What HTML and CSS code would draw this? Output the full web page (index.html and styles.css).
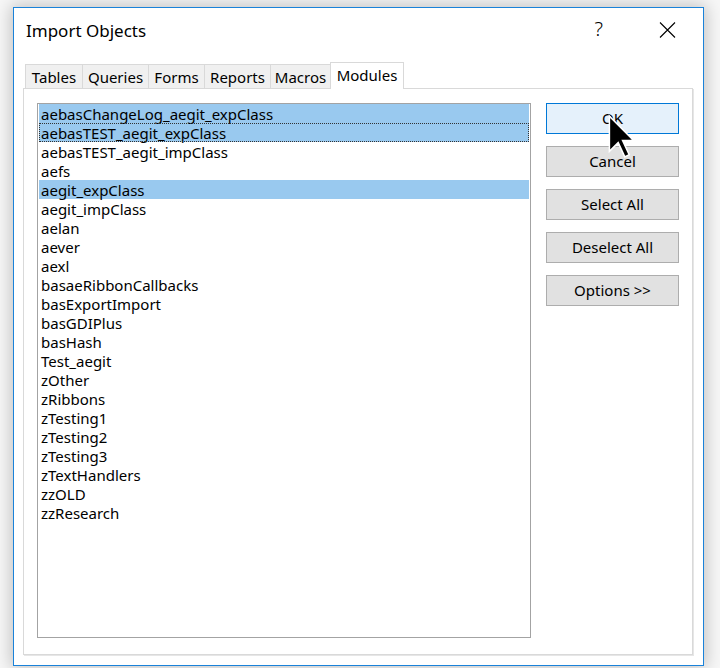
FILE: index.html
```html
<!DOCTYPE html>
<html>
<head>
<meta charset="utf-8">
<title>Import Objects</title>
<link rel="stylesheet" href="styles.css">
</head>
<body>
<div class="window">
  <div class="titlebar">
    <span class="title">Import Objects</span>
    <span class="help">?</span>
    <span class="close"><svg width="17" height="16" viewBox="0 0 17 16"><path d="M1 0.5 L16 15.5 M16 0.5 L1 15.5" stroke="#000" stroke-width="1.1" fill="none"/></svg></span>
  </div>
  <div class="content">
    <div class="tabs">
      <div class="tab t-tables">Tables</div>
      <div class="tab t-queries">Queries</div>
      <div class="tab t-forms">Forms</div>
      <div class="tab t-reports">Reports</div>
      <div class="tab t-macros">Macros</div>
      <div class="tab t-modules active">Modules</div>
    </div>
    <div class="panel">
      <div class="listbox">
        <div class="item sel">aebasChangeLog_aegit_expClass</div>
        <div class="item sel focus">aebasTEST_aegit_expClass</div>
        <div class="item">aebasTEST_aegit_impClass</div>
        <div class="item">aefs</div>
        <div class="item sel">aegit_expClass</div>
        <div class="item">aegit_impClass</div>
        <div class="item">aelan</div>
        <div class="item">aever</div>
        <div class="item">aexl</div>
        <div class="item">basaeRibbonCallbacks</div>
        <div class="item">basExportImport</div>
        <div class="item">basGDIPlus</div>
        <div class="item">basHash</div>
        <div class="item">Test_aegit</div>
        <div class="item">zOther</div>
        <div class="item">zRibbons</div>
        <div class="item">zTesting1</div>
        <div class="item">zTesting2</div>
        <div class="item">zTesting3</div>
        <div class="item">zTextHandlers</div>
        <div class="item">zzOLD</div>
        <div class="item">zzResearch</div>
      </div>
      <div class="buttons">
        <div class="btn default">OK</div>
        <div class="btn">Cancel</div>
        <div class="btn">Select All</div>
        <div class="btn">Deselect All</div>
        <div class="btn">Options &gt;&gt;</div>
      </div>
    </div>
  </div>
  <svg class="cursor" width="29" height="44" viewBox="0 0 13 20"><polygon points="1,1 1,17 5,13 8,19.5 10,18.5 7,12 12,12" fill="#000" stroke="#fff" stroke-width="0.7" stroke-linejoin="miter"/></svg>
</div>
</body>
</html>
```

FILE: styles.css
```css
html, body {
  margin: 0;
  padding: 0;
}
body {
  background: #f7f7f7;
  width: 720px;
  height: 668px;
  overflow: hidden;
  padding: 7px 0 0 13px;
  box-sizing: border-box;
  font-family: "Noto Sans", "Open Sans", sans-serif;
  color: #000;
}
.window {
  position: relative;
  width: 691px;
  height: 659px;
  box-sizing: border-box;
  border: 1px solid #1a82d9;
  background: #fff;
  box-shadow: 0 0 16px 2px rgba(0, 0, 0, 0.22);
}
.titlebar {
  height: 54px;
  box-sizing: border-box;
  padding: 11px 27px 0 12px;
  display: flex;
  align-items: flex-start;
}
.title {
  font-size: 17px;
  line-height: 24px;
}
.help {
  margin-left: auto;
  margin-top: -2px;
  font-size: 20px;
  line-height: 24px;
  font-weight: 300;
}
.close {
  margin-left: 56px;
  margin-top: 3px;
  display: block;
  height: 16px;
}
.close svg {
  display: block;
}
.content {
  padding-left: 9px;
}
.tabs {
  display: flex;
  align-items: flex-end;
  height: 26px;
  padding-left: 2px;
  position: relative;
  z-index: 2;
}
.tab {
  box-sizing: border-box;
  height: 24px;
  border: 1px solid #d9d9d9;
  border-bottom: none;
  background: #f0f0f0;
  font-size: 15px;
  line-height: 24px;
  text-align: center;
  margin-left: -1px;
}
.tab:first-child {
  margin-left: 0;
}
.t-tables { width: 58px; }
.t-queries { width: 67px; }
.t-forms { width: 57px; }
.t-reports { width: 67px; }
.t-macros { width: 61px; }
.t-modules { width: 74px; }
.tab.active {
  height: 27px;
  margin-bottom: -1px;
  background: #fff;
  line-height: 24px;
}
.panel {
  width: 670px;
  height: 567px;
  box-sizing: border-box;
  border: 1px solid #d9d9d9;
  box-shadow: 1px 1px 0 #e6e6e6;
  padding: 14px 0 0 13px;
  display: flex;
  align-items: flex-start;
  background: #fff;
}
.listbox {
  width: 494px;
  height: 535px;
  box-sizing: border-box;
  border: 1px solid #a3a3a3;
  padding: 0 1px;
}
.item {
  height: 19px;
  line-height: 20px;
  font-size: 15px;
  padding-left: 2px;
  white-space: nowrap;
  box-sizing: border-box;
}
.item.sel {
  background: #99c9ef;
}
.item.focus {
  outline: 1px dotted #333;
  outline-offset: -1px;
}
.buttons {
  margin-left: 15px;
  display: flex;
  flex-direction: column;
  gap: 12px;
}
.btn {
  width: 133px;
  height: 31px;
  box-sizing: border-box;
  border: 1px solid #adadad;
  background: #e1e1e1;
  font-size: 15px;
  line-height: 29px;
  text-align: center;
}
.btn.default {
  background: #e5f1fb;
  border-color: #0078d7;
}
.cursor {
  position: absolute;
  left: 593px;
  top: 106px;
  z-index: 5;
}
```
